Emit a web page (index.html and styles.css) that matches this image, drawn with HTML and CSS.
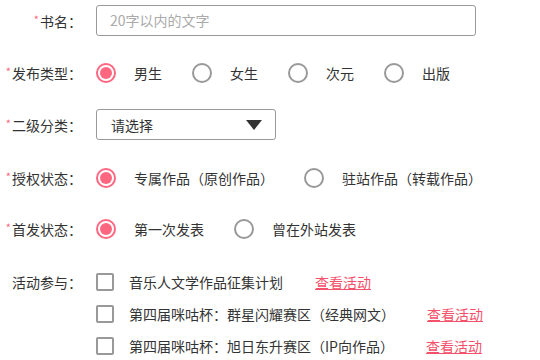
FILE: index.html
```html
<!DOCTYPE html>
<html lang="zh-CN">
<head>
    <meta charset="UTF-8">
    <title>作品信息</title>
    <link rel="stylesheet" href="styles.css">
</head>
<body>
    <form class="book-form">
        <div class="row row-name">
            <label class="label"><span class="req">*</span>书名：</label>
            <div class="input">20字以内的文字</div>
        </div>

        <div class="row row-type">
            <label class="label"><span class="req">*</span>发布类型：</label>
            <div class="options">
                <span class="radio checked"></span><span class="opt-text">男生</span>
                <span class="radio"></span><span class="opt-text">女生</span>
                <span class="radio"></span><span class="opt-text">次元</span>
                <span class="radio"></span><span class="opt-text">出版</span>
            </div>
        </div>

        <div class="row row-sub">
            <label class="label"><span class="req">*</span>二级分类：</label>
            <div class="select">
                <span>请选择</span>
                <span class="arrow"></span>
            </div>
        </div>

        <div class="row row-auth">
            <label class="label"><span class="req">*</span>授权状态：</label>
            <div class="options">
                <span class="radio checked"></span><span class="opt-text">专属作品（原创作品）</span>
                <span class="radio"></span><span class="opt-text">驻站作品（转载作品）</span>
            </div>
        </div>

        <div class="row row-first">
            <label class="label"><span class="req">*</span>首发状态：</label>
            <div class="options">
                <span class="radio checked"></span><span class="opt-text">第一次发表</span>
                <span class="radio"></span><span class="opt-text">曾在外站发表</span>
            </div>
        </div>

        <div class="row row-act">
            <label class="label">活动参与：</label>
            <div class="activity">
                <span class="checkbox"></span>
                <span class="act-text">音乐人文学作品征集计划</span>
                <a class="act-link" href="#">查看活动</a>
            </div>
        </div>
        <div class="row row-act">
            <label class="label"></label>
            <div class="activity">
                <span class="checkbox"></span>
                <span class="act-text">第四届咪咕杯：群星闪耀赛区（经典网文）</span>
                <a class="act-link" href="#">查看活动</a>
            </div>
        </div>
        <div class="row row-act">
            <label class="label"></label>
            <div class="activity">
                <span class="checkbox"></span>
                <span class="act-text">第四届咪咕杯：旭日东升赛区（IP向作品）</span>
                <a class="act-link" href="#">查看活动</a>
            </div>
        </div>
    </form>
</body>
</html>
```

FILE: styles.css
```css
/* Global */
body {
    margin: 0;
    font-family: "Noto Sans CJK SC", "Noto Sans", sans-serif;
    font-size: 14px;
    color: #333;
    background-color: #fff;
}

.book-form {
    display: flex;
    flex-direction: column;
    padding-top: 5px;
}

/* Rows */
.row {
    display: flex;
    align-items: center;
    height: 32px;
}

.row-name { height: 31px; }
.row-type { margin-top: 21px; }
.row-sub { margin-top: 20px; height: 31px; }
.row-auth { margin-top: 22px; }
.row-first { margin-top: 19px; }
.row-act:nth-of-type(6) { margin-top: 21px; }

.label {
    width: 82px;
    margin-right: 14px;
    text-align: right;
    white-space: nowrap;
    color: #333;
}

.req {
    color: #ff6680;
    font-size: 11px;
    vertical-align: 3px;
    margin-right: 1px;
}

/* Text input */
.input {
    box-sizing: border-box;
    width: 380px;
    height: 31px;
    border: 1px solid #999;
    border-radius: 3px;
    padding-left: 13px;
    line-height: 29px;
    color: #aaa;
}

/* Select */
.select {
    box-sizing: border-box;
    width: 180px;
    height: 31px;
    border: 1px solid #999;
    border-radius: 3px;
    padding: 0 13px 0 14px;
    display: flex;
    align-items: center;
    justify-content: space-between;
}

.arrow {
    width: 0;
    height: 0;
    border-left: 8px solid transparent;
    border-right: 8px solid transparent;
    border-top: 10px solid #333;
}

/* Radios */
.options {
    display: flex;
    align-items: center;
}

.radio {
    box-sizing: border-box;
    width: 20px;
    height: 20px;
    border: 2px solid #999;
    border-radius: 50%;
    margin-right: 18px;
    position: relative;
}

.radio.checked {
    border-color: #ff6680;
}

.radio.checked::after {
    content: "";
    position: absolute;
    left: 2px;
    top: 2px;
    width: 12px;
    height: 12px;
    border-radius: 50%;
    background-color: #ff6680;
}

.opt-text {
    margin-right: 30px;
}

/* Activities */
.activity {
    display: flex;
    align-items: center;
}

.checkbox {
    box-sizing: border-box;
    width: 18px;
    height: 18px;
    border: 2px solid #999;
    border-radius: 2px;
    margin-right: 15px;
}

.act-link {
    margin-left: 32px;
    color: #f5506a;
    text-decoration: underline;
}
```
